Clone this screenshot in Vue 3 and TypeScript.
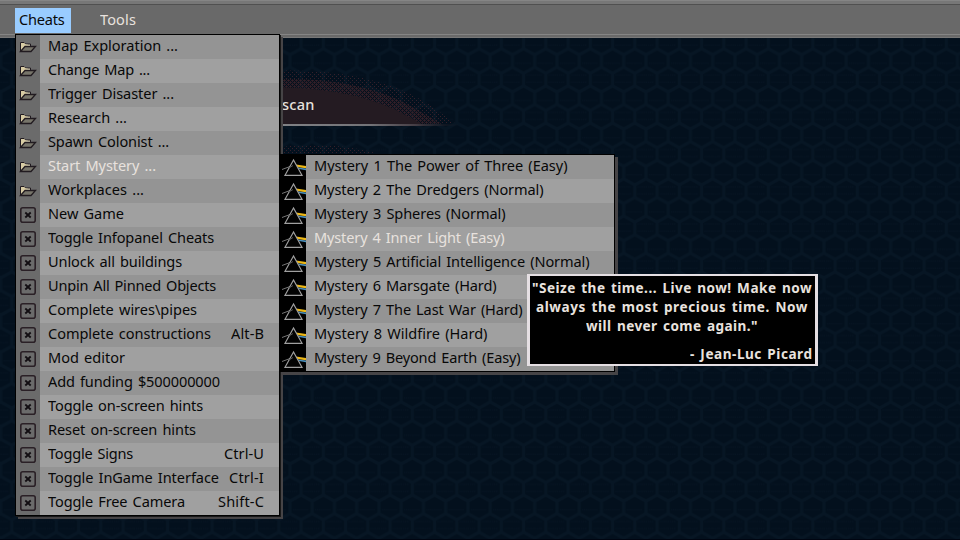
<script setup lang="ts">
import type { Directive } from 'vue'

interface Entry {
  label: string
  width: number
  folder?: boolean
  key?: string
  keyWidth?: number
  active?: boolean
}

const cheats: Entry[] = [
  { label: 'Map Exploration ...', width: 130, folder: true },
  { label: 'Change Map ...', width: 102, folder: true },
  { label: 'Trigger Disaster ...', width: 126, folder: true },
  { label: 'Research ...', width: 79, folder: true },
  { label: 'Spawn Colonist ...', width: 121, folder: true },
  { label: 'Start Mystery ...', width: 108, folder: true, active: true },
  { label: 'Workplaces ...', width: 96, folder: true },
  { label: 'New Game', width: 76 },
  { label: 'Toggle Infopanel Cheats', width: 166 },
  { label: 'Unlock all buildings', width: 134 },
  { label: 'Unpin All Pinned Objects', width: 168 },
  { label: 'Complete wires\\pipes', width: 149 },
  { label: 'Complete constructions', width: 163, key: 'Alt-B', keyWidth: 33 },
  { label: 'Mod editor', width: 77 },
  { label: 'Add funding $500000000', width: 172 },
  { label: 'Toggle on-screen hints', width: 155 },
  { label: 'Reset on-screen hints', width: 148 },
  { label: 'Toggle Signs', width: 85, key: 'Ctrl-U', keyWidth: 40 },
  { label: 'Toggle InGame Interface', width: 171, key: 'Ctrl-I', keyWidth: 35 },
  { label: 'Toggle Free Camera', width: 137, key: 'Shift-C', keyWidth: 46 },
]

const mysteries: Entry[] = [
  { label: 'Mystery 1 The Power of Three (Easy)', width: 253.5 },
  { label: 'Mystery 2 The Dredgers (Normal)', width: 229.5 },
  { label: 'Mystery 3 Spheres (Normal)', width: 191.5 },
  { label: 'Mystery 4 Inner Light (Easy)', width: 190.5, active: true },
  { label: 'Mystery 5 Artificial Intelligence (Normal)', width: 275.5 },
  { label: 'Mystery 6 Marsgate (Hard)', width: 182.5 },
  { label: 'Mystery 7 The Last War (Hard)', width: 208.5 },
  { label: 'Mystery 8 Wildfire (Hard)', width: 173.5 },
  { label: 'Mystery 9 Beyond Earth (Easy)', width: 206.5 },
]

const quote: Entry[] = [
  { label: '"Seize the time... Live now! Make now', width: 280 },
  { label: 'always the most precious time. Now', width: 272 },
  { label: 'will never come again."', width: 172 },
]

const GLYPH_SCALE = 0.97
const WORD_GAP = 1.5

// Sets a label in slightly narrowed letters with wide word gaps, over its set width.
const vFit: Directive<HTMLElement, number> = {
  mounted(el, { value }) {
    const text = el.textContent ?? ' '
    const gaps = text.split(' ').length - 1
    const natural = el.getBoundingClientRect().width
    const spare = value / GLYPH_SCALE - natural - gaps * WORD_GAP
    el.style.wordSpacing = `${WORD_GAP}px`
    el.style.letterSpacing = `${spare / text.length}px`
    el.style.width = `${value}px`
    el.style.transform = `scaleX(${GLYPH_SCALE})`
  },
}
</script>

<template>
  <main class="screen">
    <svg class="backdrop" width="960" height="540">
      <defs>
        <pattern id="hex" width="22.25" height="37.2" patternUnits="userSpaceOnUse" patternTransform="translate(668.2 386.5)">
          <path d="M0 3V15.5L11.125 21.6L22.25 15.5V3L11.125 -3L0 3M11.125 21.6V34.2L0 40.2M11.125 34.2L22.25 40.2M0 3L11.125 -3L22.25 3" fill="none" stroke="#071624" stroke-width="3" stroke-linejoin="round" />
          <path d="M3 11.5H19M-8 23.5H8M14 23.5H30M-8 30.5H8M14 30.5H30" stroke="#071524" stroke-width="1" stroke-dasharray="1 1" />
        </pattern>
        <pattern id="grain" width="4" height="4" patternUnits="userSpaceOnUse">
          <path d="M0 0h1v1h-1zM2 2h1v1h-1z" fill="#34202a" />
        </pattern>
        <pattern id="dense" width="2" height="2" patternUnits="userSpaceOnUse">
          <path d="M1 0h1v1h-1zM0 1h1v1h-1z" fill="#2b1c24" />
        </pattern>
        <linearGradient id="rule" x1="281" x2="460" y1="0" y2="0" gradientUnits="userSpaceOnUse">
          <stop offset="0" stop-color="#aaa7a8" />
          <stop offset=".5" stop-color="#989394" />
          <stop offset=".75" stop-color="#5a4b50" />
          <stop offset="1" stop-color="#241b22" stop-opacity="0" />
        </linearGradient>
      </defs>
      <rect width="960" height="540" fill="#03101d" />
      <rect width="960" height="540" fill="url(#hex)" />
      <path d="M270 71C345 68 395 83 430 105L456 124H270Z" fill="url(#grain)" />
      <path d="M270 79C340 77 385 91 414 108L442 124H270Z" fill="url(#dense)" />
      <path d="M270 87C330 88 365 96 396 110L422 124H270Z" fill="#241b22" />
      <path d="M281 155V147C315 143 350 145 382 155Z" fill="url(#grain)" />
      <path d="M281 125H460" stroke="url(#rule)" stroke-width="1.5" />
      <path d="M0 539.5H960" stroke="#000511" />
    </svg>

    <header class="bar">
      <span class="tab open"><span v-fit="45.5" class="text">Cheats</span></span>
      <span class="tab"><span v-fit="36" class="text">Tools</span></span>
    </header>
    <div class="scan"><span v-fit="32.5" class="text">scan</span></div>

    <section class="menu cheats">
      <div v-for="item in cheats" :key="item.label" class="row" :class="{ active: item.active }">
        <span class="icon">
          <svg v-if="item.folder" width="18" height="14" viewBox="0 0 18 14">
            <path d="M1.5 11V2.5H5L6.5 4H11.5V6" fill="#d9d0b4" stroke="#211b20" />
            <path d="M2 10.5V3H5L6.5 4.5H9L5 7Z" fill="#d8cca4" />
            <path d="M1.5 11.5L6 6.5H16.5L12 11.5Z" fill="#77756a" stroke="#211b20" stroke-width="1.3" />
          </svg>
          <svg v-else width="16" height="16" viewBox="0 0 16 16">
            <rect x=".8" y=".8" width="14.4" height="14.4" rx="2" fill="none" stroke="#2a2026" stroke-width="1.6" />
            <path d="M5.3 5.5L10.7 10.5M10.7 5.5L5.3 10.5" stroke="#120e12" stroke-width="1.8" />
          </svg>
        </span>
        <span class="body">
          <span v-fit="item.width" class="text">{{ item.label }}</span>
          <span v-if="item.key" v-fit="item.keyWidth ?? 0" class="text key">{{ item.key }}</span>
        </span>
      </div>
    </section>

    <section class="menu mysteries">
      <div v-for="item in mysteries" :key="item.label" class="row" :class="{ active: item.active }">
        <span class="icon">
          <svg width="25" height="24" viewBox="0 0 25 24">
            <path d="M1 14.5L9 11.5" stroke="#777" />
            <path d="M15 9.5L25 11V13.2L16 12Z" fill="#edb817" />
            <path d="M16.5 12.5L25 13.5V15.2L18 14Z" fill="#4c91bd" />
            <path d="M12.5 5L4 20.3H21Z" fill="#030303" stroke="#a0a0a0" stroke-width="1.2" />
            <path d="M8 13L12 10.5" stroke="#555" />
          </svg>
        </span>
        <span class="body"><span v-fit="item.width" class="text">{{ item.label }}</span></span>
      </div>
    </section>

    <aside class="tooltip">
      <p v-for="line in quote" :key="line.label"><span v-fit="line.width" class="text">{{ line.label }}</span></p>
      <p class="author"><span v-fit="122.5" class="text">- Jean-Luc Picard</span></p>
    </aside>
  </main>
</template>

<style>
body {
  overflow: hidden;
  background: #03101d;
}
</style>

<style scoped>
.screen {
  position: relative;
  width: 960px;
  height: 540px;
  overflow: hidden;
  font: 15px/24px "Noto Sans", sans-serif;
  color: #080808;
}
.backdrop {
  position: absolute;
  inset: 0;
}
.text {
  display: inline-block;
  white-space: pre;
  text-align: left;
  transform-origin: left center;
}
.bar {
  position: relative;
  box-sizing: border-box;
  display: flex;
  height: 38px;
  padding: 8px 0 0 15px;
  background: linear-gradient(#858585 0 1px, #777 1px 4px, #505050 4px 5px, #696969 5px 34px, #858585 34px 35px, #696969 35px 37px, #777 37px);
}
.tab {
  box-sizing: border-box;
  height: 25px;
  margin-right: 24.5px;
  padding: 0 4px;
  line-height: 22px;
  color: #e8e2de;
}
.tab.open {
  width: 56px;
  background: #99ccff;
  color: #080808;
}
.scan {
  position: absolute;
  left: 281.5px;
  top: 92px;
  font-weight: 500;
  color: #e8e2de;
}
.menu {
  position: absolute;
  border: 1px solid #000;
}
.cheats {
  left: 15px;
  top: 34px;
  width: 263px;
  box-shadow: 1px 1px 0 #181818, 3px 3px 0 #464446;
}
.mysteries {
  left: 280px;
  top: 154px;
  width: 333px;
  box-shadow: 3px 3px 0 #464446;
}
.row {
  display: flex;
  height: 24px;
}
.icon {
  display: flex;
  flex: none;
  align-items: center;
  justify-content: center;
  width: 24px;
  background: #6b6b6b;
}
.mysteries .icon {
  width: 25px;
  background: #000;
}
.body {
  display: flex;
  flex: 1;
  justify-content: space-between;
  height: 24px;
  box-sizing: border-box;
  padding: 0 15.5px 0 8px;
  line-height: 20px;
  background: #949494;
}
.row:nth-child(even) .body {
  background: #a0a0a0;
}
.active .body {
  color: #e8e2de;
}
.tooltip {
  position: absolute;
  left: 527px;
  top: 274px;
  box-sizing: border-box;
  width: 291px;
  height: 92px;
  padding: 2px 3px 0 2px;
  border: solid #e5dfe3;
  border-width: 2px 3px;
  background: #000;
  color: #e8e2de;
  font-size: 14px;
  font-weight: 700;
  line-height: 19px;
  text-align: center;
}
.tooltip p {
  margin: 0;
}
.tooltip .author {
  margin-top: 9px;
  text-align: right;
}
</style>
